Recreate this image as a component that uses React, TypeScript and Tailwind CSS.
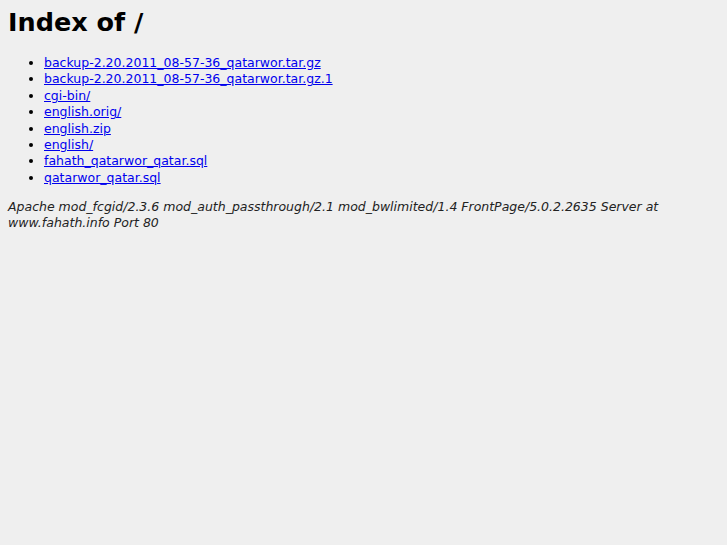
const files = [
  "backup-2.20.2011_08-57-36_qatarwor.tar.gz",
  "backup-2.20.2011_08-57-36_qatarwor.tar.gz.1",
  "cgi-bin/",
  "english.orig/",
  "english.zip",
  "english/",
  "fahath_qatarwor_qatar.sql",
  "qatarwor_qatar.sql",
];

export default function App() {
  return (
    <div className="min-h-[545px] bg-[#efefef] p-2 text-black font-['DejaVu_Sans',sans-serif]">
      <h1 className="text-[25.5px] font-bold leading-[28px]">Index of /</h1>
      <ul className="list-disc pl-9 mt-[19px] text-[12.5px] leading-[16.4px]">
        {files.map((f) => (
          <li key={f}>
            <a href="#" className="text-[#0000ee] underline">
              {f}
            </a>
          </li>
        ))}
      </ul>
      <address className="italic text-[12.5px] leading-[16px] mt-[13px] text-[#222]">
        Apache mod_fcgid/2.3.6 mod_auth_passthrough/2.1 mod_bwlimited/1.4 FrontPage/5.0.2.2635 Server at www.fahath.info Port 80
      </address>
    </div>
  );
}
